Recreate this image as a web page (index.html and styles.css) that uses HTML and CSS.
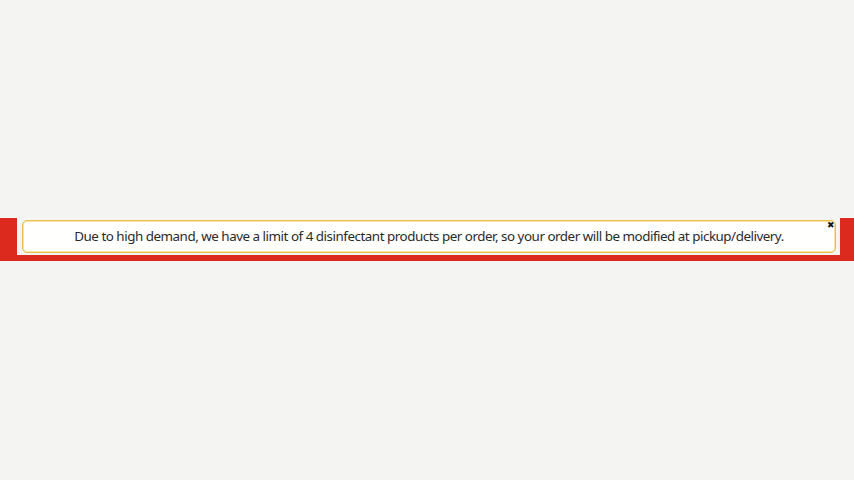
FILE: index.html
```html
<!DOCTYPE html>
<html>
<head>
<meta charset="utf-8">
<link rel="stylesheet" href="styles.css">
</head>
<body>
<div class="top-space"></div>
<div class="alert-band">
  <div class="alert-inner">
    <div class="alert-box">Due to high demand, we have a limit of 4 disinfectant products per order, so your order will be modified at pickup/delivery.</div>
    <span class="alert-close">&#x2716;</span>
  </div>
</div>
</body>
</html>
```
FILE: styles.css
```css
html, body {
  margin: 0;
  padding: 0;
  background: #f4f4f2;
  height: 100%;
}
body {
  font-family: "Noto Sans", "Open Sans", sans-serif;
}
.top-space {
  height: 218px;
}
.alert-band {
  background: #dc2a1e;
  padding: 0 14px 6px 17px;
}
.alert-inner {
  position: relative;
  background: #f4f4f2;
  padding: 2px 4px 2px 5px;
}
.alert-box {
  background: #fffffe;
  border: 1px solid #e6c04a;
  box-shadow: inset 0 0 0 1px #f7e3a6;
  border-radius: 5px;
  box-sizing: border-box;
  height: 33px;
  padding-bottom: 1px;
  display: flex;
  align-items: center;
  justify-content: center;
  font-size: 13.4px;
  color: #2a2a2a;
  letter-spacing: -0.48px;
}
.alert-close {
  position: absolute;
  top: 2px;
  right: 5px;
  font-size: 9px;
  line-height: 10px;
  color: #111;
}
```
